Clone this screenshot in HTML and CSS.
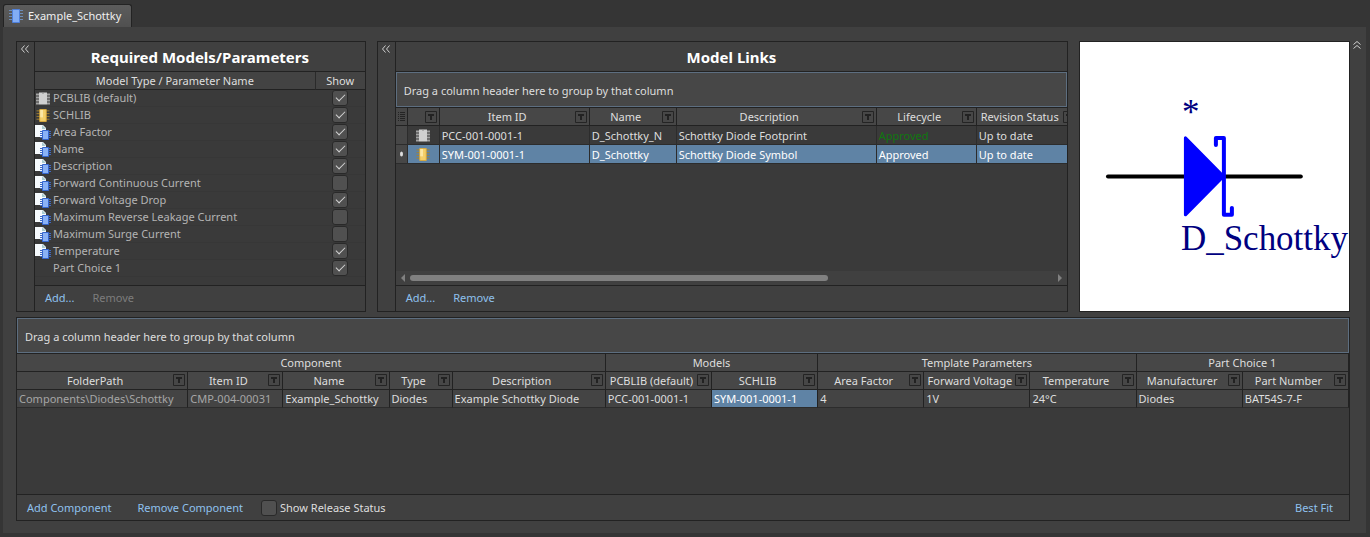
FILE: index.html
```html
<!DOCTYPE html>
<html lang="en">
<head>
    <meta charset="UTF-8">
    <meta name="viewport" content="width=device-width, initial-scale=1.0">
    <title>Example_Schottky</title>
    <link rel="stylesheet" href="styles.css">
</head>
<body>

    <!-- shared icons -->
    <svg class="sprite">
        <symbol id="filter" viewBox="0 0 12 12">
            <path d="M0.500 0.500h11v11h-11z" fill="none" stroke="#242424"/>
            <path d="M3 3h6v2H7v4H5V5H3z" fill="#222"/>
        </symbol>
        <symbol id="chip-gray" viewBox="0 0 14 12">
            <path d="M0 1h3v2H0zM0 4h3v2H0zM0 7h3v2H0zM0 10h3v2H0zM11 1h3v2h-3zM11 4h3v2h-3zM11 7h3v2h-3zM11 10h3v2h-3z" fill="#a2a2a2"/>
            <path d="M3 0h8v12H3z" fill="#d0d0d0"/>
            <path d="M6 0h2v1H6z" fill="#888"/>
        </symbol>
        <symbol id="chip-gold" viewBox="0 0 14 14">
            <path d="M0 2h14M0 5h14M0 8h14M0 11h14" stroke="#a8832f"/>
            <path d="M3.500 0.500h7v13h-7z" fill="#f4cf69" stroke="#d9a93a"/>
            <path d="M4 1h3v8H4z" fill="#fbe7a5"/>
        </symbol>
        <symbol id="chip-blue" viewBox="0 0 14 14">
            <path d="M0 1.500h14M0 4.500h14M0 7.500h14M0 10.500h14" stroke="#6c8db8"/>
            <path d="M3.500 0.500h7v13h-7z" fill="#82adf5" stroke="#4f80db"/>
        </symbol>
        <symbol id="param" viewBox="0 0 16 16">
            <path d="M0 1h8l3 3v9H0z" fill="#f6fafd"/>
            <path d="M7 1l4 4H7z" fill="#a9cbd0"/>
            <path d="M5 7.500h11M5 9.500h11M5 11.500h11M5 13.500h11" stroke="#3f6ac4"/>
            <path d="M7.500 6.500h6v9h-6z" fill="#8ab2f6" stroke="#3566cf"/>
        </symbol>
        <symbol id="collapse" viewBox="0 0 8 8">
            <path d="M3.500 0.500L0.500 4l3 3.500M7.500 0.500L4.500 4l3 3.500" fill="none" stroke="#d0d0d0"/>
        </symbol>
    </svg>

    <div class="tabs">
        <a href="#" class="tab"><svg class="ico-tab"><use href="#chip-blue"/></svg>Example_Schottky</a>
    </div>

    <main class="workspace">
        <div class="top">

            <section class="panel">
                <button class="collapse" aria-label="Collapse required models"><svg><use href="#collapse"/></svg></button>
                <div class="panel-body">
                    <h2>Required Models/Parameters</h2>
                    <div class="list">
                        <table class="params">
                            <thead>
                                <tr><th>Model Type / Parameter Name</th><th class="show">Show</th></tr>
                            </thead>
                            <tbody>
                                <tr><td><label for="p1"><svg><use href="#chip-gray"/></svg>PCBLIB (default)</label></td><td><input type="checkbox" id="p1" checked></td></tr>
                                <tr><td><label for="p2"><svg><use href="#chip-gold"/></svg>SCHLIB</label></td><td><input type="checkbox" id="p2" checked></td></tr>
                                <tr><td><label for="p3"><svg class="doc"><use href="#param"/></svg>Area Factor</label></td><td><input type="checkbox" id="p3" checked></td></tr>
                                <tr><td><label for="p4"><svg class="doc"><use href="#param"/></svg>Name</label></td><td><input type="checkbox" id="p4" checked></td></tr>
                                <tr><td><label for="p5"><svg class="doc"><use href="#param"/></svg>Description</label></td><td><input type="checkbox" id="p5" checked></td></tr>
                                <tr><td><label for="p6"><svg class="doc"><use href="#param"/></svg>Forward Continuous Current</label></td><td><input type="checkbox" id="p6"></td></tr>
                                <tr><td><label for="p7"><svg class="doc"><use href="#param"/></svg>Forward Voltage Drop</label></td><td><input type="checkbox" id="p7" checked></td></tr>
                                <tr><td><label for="p8"><svg class="doc"><use href="#param"/></svg>Maximum Reverse Leakage Current</label></td><td><input type="checkbox" id="p8"></td></tr>
                                <tr><td><label for="p9"><svg class="doc"><use href="#param"/></svg>Maximum Surge Current</label></td><td><input type="checkbox" id="p9"></td></tr>
                                <tr><td><label for="p10"><svg class="doc"><use href="#param"/></svg>Temperature</label></td><td><input type="checkbox" id="p10" checked></td></tr>
                                <tr><td><label for="p11"><svg></svg>Part Choice 1</label></td><td><input type="checkbox" id="p11" checked></td></tr>
                            </tbody>
                        </table>
                    </div>
                    <div class="actions">
                        <button>Add...</button>
                        <button disabled>Remove</button>
                    </div>
                </div>
            </section>

            <section class="panel">
                <button class="collapse" aria-label="Collapse model links"><svg><use href="#collapse"/></svg></button>
                <div class="panel-body">
                    <h2>Model Links</h2>
                    <div class="groupby">Drag a column header here to group by that column</div>
                    <div class="list">
                        <table class="grid links">
                            <colgroup>
                                <col class="w-mark"><col class="w-icon"><col class="w-item"><col class="w-name"><col class="w-desc"><col class="w-life"><col class="w-rev">
                            </colgroup>
                            <thead>
                                <tr>
                                    <th class="mark"><svg class="rows" viewBox="0 0 7 10"><path d="M0 0.500h1M0 2.500h1M0 4.500h1M0 6.500h1M0 8.500h1M2 0.500h5M2 2.500h5M2 4.500h5M2 6.500h5M2 8.500h5" stroke="#242424"/></svg></th>
                                    <th><div><span></span><button aria-label="Filter type"><svg><use href="#filter"/></svg></button></div></th>
                                    <th><div><span>Item ID</span><button aria-label="Filter item"><svg><use href="#filter"/></svg></button></div></th>
                                    <th><div><span>Name</span><button aria-label="Filter name"><svg><use href="#filter"/></svg></button></div></th>
                                    <th><div><span>Description</span><button aria-label="Filter description"><svg><use href="#filter"/></svg></button></div></th>
                                    <th><div><span>Lifecycle</span><button aria-label="Filter lifecycle"><svg><use href="#filter"/></svg></button></div></th>
                                    <th><div><span>Revision Status</span><button aria-label="Filter revision"><svg><use href="#filter"/></svg></button></div></th>
                                </tr>
                            </thead>
                            <tbody>
                                <tr>
                                    <td class="mark"></td>
                                    <td class="type"><svg><use href="#chip-gray"/></svg></td>
                                    <td>PCC-001-0001-1</td>
                                    <td>D_Schottky_N</td>
                                    <td>Schottky Diode Footprint</td>
                                    <td class="approved">Approved</td>
                                    <td>Up to date</td>
                                </tr>
                                <tr class="selected">
                                    <td class="mark"><svg class="dot" viewBox="0 0 3 6"><ellipse cx="1.500" cy="3" rx="1.500" ry="2.500" fill="#ddd"/></svg></td>
                                    <td class="type"><svg><use href="#chip-gold"/></svg></td>
                                    <td>SYM-001-0001-1</td>
                                    <td>D_Schottky</td>
                                    <td>Schottky Diode Symbol</td>
                                    <td>Approved</td>
                                    <td>Up to date</td>
                                </tr>
                            </tbody>
                        </table>
                    </div>
                    <div class="scroll">
                        <svg viewBox="0 0 4 8"><path d="M4 0v8L0 4z" fill="#808080"/></svg>
                        <div class="track"><div class="thumb"></div></div>
                        <svg viewBox="0 0 4 8"><path d="M0 0v8l4-4z" fill="#808080"/></svg>
                    </div>
                    <div class="actions">
                        <button>Add...</button>
                        <button>Remove</button>
                    </div>
                </div>
            </section>

            <div class="preview">
                <svg viewBox="0 0 269 269">
                    <path d="M28 134.500h193" stroke="#000" stroke-width="4" stroke-linecap="round"/>
                    <path d="M105.500 96v77l38-38.500z" fill="#00f" stroke="#00f" stroke-width="3" stroke-linejoin="round"/>
                    <path d="M136 103v-7h8v77h8v-7" fill="none" stroke="#00f" stroke-width="4" stroke-linecap="round" stroke-linejoin="round"/>
                    <text x="102" y="82">*</text>
                    <text x="101" y="208">D_Schottky</text>
                </svg>
            </div>

            <button class="collapse-up" aria-label="Collapse top"><svg viewBox="0 0 8 8"><path d="M0.500 3.500L4 0.500l3.500 3M0.500 7.500L4 4.500l3.500 3" fill="none" stroke="#d0d0d0"/></svg></button>
        </div>

        <section class="panel components">
            <div class="panel-body">
                <div class="groupby">Drag a column header here to group by that column</div>
                <div class="list">
                    <table class="grid parts">
                        <colgroup>
                            <col class="c-folder"><col class="c-id"><col class="c-name"><col class="c-type"><col class="c-desc">
                            <col class="c-std"><col class="c-std"><col class="c-std"><col class="c-std"><col class="c-std"><col class="c-std"><col class="c-std">
                        </colgroup>
                        <thead>
                            <tr>
                                <th colspan="5">Component</th>
                                <th colspan="2">Models</th>
                                <th colspan="3">Template Parameters</th>
                                <th colspan="2">Part Choice 1</th>
                            </tr>
                            <tr>
                                <th><div><span>FolderPath</span><button aria-label="Filter folder"><svg><use href="#filter"/></svg></button></div></th>
                                <th><div><span>Item ID</span><button aria-label="Filter item"><svg><use href="#filter"/></svg></button></div></th>
                                <th><div><span>Name</span><button aria-label="Filter name"><svg><use href="#filter"/></svg></button></div></th>
                                <th><div><span>Type</span><button aria-label="Filter type"><svg><use href="#filter"/></svg></button></div></th>
                                <th><div><span>Description</span><button aria-label="Filter description"><svg><use href="#filter"/></svg></button></div></th>
                                <th><div><span>PCBLIB (default)</span><button aria-label="Filter PCBLIB"><svg><use href="#filter"/></svg></button></div></th>
                                <th><div><span>SCHLIB</span><button aria-label="Filter SCHLIB"><svg><use href="#filter"/></svg></button></div></th>
                                <th><div><span>Area Factor</span><button aria-label="Filter area"><svg><use href="#filter"/></svg></button></div></th>
                                <th><div><span>Forward Voltage</span><button aria-label="Filter voltage"><svg><use href="#filter"/></svg></button></div></th>
                                <th><div><span>Temperature</span><button aria-label="Filter temperature"><svg><use href="#filter"/></svg></button></div></th>
                                <th><div><span>Manufacturer</span><button aria-label="Filter manufacturer"><svg><use href="#filter"/></svg></button></div></th>
                                <th><div><span>Part Number</span><button aria-label="Filter part number"><svg><use href="#filter"/></svg></button></div></th>
                            </tr>
                        </thead>
                        <tbody>
                            <tr>
                                <td class="dim">Components\Diodes\Schottky</td>
                                <td class="dim">CMP-004-00031</td>
                                <td>Example_Schottky</td>
                                <td>Diodes</td>
                                <td>Example Schottky Diode</td>
                                <td>PCC-001-0001-1</td>
                                <td class="active">SYM-001-0001-1</td>
                                <td>4</td>
                                <td>1V</td>
                                <td>24°C</td>
                                <td>Diodes</td>
                                <td>BAT54S-7-F</td>
                            </tr>
                        </tbody>
                    </table>
                </div>
                <div class="actions wide">
                    <button class="add">Add Component</button>
                    <button>Remove Component</button>
                    <label><input type="checkbox">Show Release Status</label>
                    <button class="fit">Best Fit</button>
                </div>
            </div>
        </section>
    </main>

</body>
</html>
```
FILE: styles.css
```css
* {
    box-sizing: border-box;
}

body {
    margin: 0;
    min-height: 100vh;
    display: flex;
    flex-direction: column;
    padding: 4px 4px 4px 3px;
    background: #353535;
    color: #dedede;
    font: 11px/16px "Noto Sans", "Open Sans", sans-serif;
}

svg {
    display: block;
    flex: none;
}

button {
    padding: 0;
    border: 0;
    background: none;
    color: inherit;
    font: inherit;
}

.sprite {
    position: absolute;
    width: 0;
    height: 0;
}

/* tabs */
.tabs {
    display: flex;
}

.tab {
    display: flex;
    align-items: center;
    gap: 5px;
    height: 23px;
    padding: 0 10px 0 5px;
    border: 1px solid #232323;
    border-bottom: 0;
    border-radius: 3px 3px 0 0;
    background: linear-gradient(#5c5c5c, #505050);
    color: #f0f0f0;
    text-decoration: none;
}

.ico-tab {
    width: 14px;
    height: 14px;
}

.workspace {
    flex: 1;
    display: flex;
    flex-direction: column;
    gap: 5px;
    padding: 14px 16px 12px 13px;
    background: #404040;
}

/* the last column is the chevron in the right margin */
.top {
    display: grid;
    grid-template-columns: 350fr 692fr 271fr 8px;
    column-gap: 11px;
    margin-right: -19px;
}

/* panels */
.panel {
    display: flex;
    min-width: 0;
    border: 1px solid #222;
}

.collapse {
    display: flex;
    width: 18px;
    padding: 3px 0 0 4px;
    border-right: 1px solid #222;
}

.collapse svg,
.collapse-up svg {
    width: 8px;
    height: 8px;
}

.collapse-up {
    align-self: start;
    margin-left: -8px;
}

.panel-body {
    flex: 1;
    min-width: 0;
    display: flex;
    flex-direction: column;
}

h2 {
    margin: 0;
    height: 30px;
    border-bottom: 1px solid #222;
    color: #fff;
    font-size: 15px;
    line-height: 31px;
    text-align: center;
}

.list {
    flex: 1;
    overflow: hidden;
    background: #3a3a3a;
}

.groupby {
    height: 35px;
    margin-bottom: 1px;
    padding: 0 7px;
    border: 1px solid #5d6e80;
    box-shadow: 0 1px #222;
    background: #474747;
    line-height: 35px;
}

.actions {
    display: flex;
    gap: 18px;
    height: 26px;
    padding: 0 10px;
    border-top: 1px solid #222;
    color: #8fc1ee;
}

.actions button:disabled {
    color: #7d7d7d;
}

.actions .add {
    margin-right: 8px;
}

.actions label {
    display: flex;
    align-items: center;
    gap: 3px;
    color: #dedede;
}

.actions .fit {
    margin-left: auto;
    margin-right: 6px;
}

/* tables */
table {
    width: 100%;
    border-spacing: 0;
    table-layout: fixed;
}

th {
    height: 18px;
    padding: 0;
    border-bottom: 1px solid #222;
    background: #474747;
    font-weight: normal;
    line-height: 17px;
}

td {
    padding: 0;
    white-space: nowrap;
}

.params th {
    background: #434343;
}

.params .show {
    width: 50px;
    border-left: 1px solid #2a2a2a;
}

.params td {
    height: 17px;
    border-bottom: 1px solid #373737;
    color: #b4b4b4;
    text-align: center;
}

.params label {
    display: flex;
    align-items: center;
    gap: 3px;
    height: 16px;
    padding-left: 1px;
}

.params svg {
    width: 14px;
    height: 13px;
}

.params .doc {
    width: 16px;
    height: 16px;
    margin: 0 -1px;
}

input[type="checkbox"] {
    appearance: none;
    display: block;
    width: 16px;
    height: 16px;
    margin: 0 auto;
    border: 1px solid #292929;
    border-radius: 3px;
    background: #505050;
}

/* tick drawn from two borders */
input[type="checkbox"]:checked::before {
    content: "";
    display: block;
    width: 4px;
    height: 8px;
    margin: 1px 5px;
    border: solid #d4d4d4;
    border-width: 0 1px 1px 0;
    transform: rotate(45deg);
}

.grid th,
.grid td {
    border-right: 1px solid #222;
}

.grid th div {
    display: flex;
    align-items: center;
    padding-right: 2px;
}

.grid th span {
    flex: 1;
    min-width: 0;
    white-space: nowrap;
}

.grid th button svg {
    width: 12px;
    height: 12px;
}

.grid td {
    height: 18px;
    padding-left: 2px;
    border-bottom: 1px solid #2c2c2c;
    line-height: 17px;
}

.links {
    width: calc(100% + 9px);
}

.links td {
    height: 19px;
    border-right-color: #2c2c2c;
}

.grid .mark {
    padding: 0;
    background: #474747;
}

.rows {
    width: 7px;
    height: 10px;
    margin: 0 auto;
}

.dot {
    width: 3px;
    height: 6px;
    margin: 0 auto;
}

.type svg {
    width: 14px;
    height: 13px;
    margin-left: 6px;
}

.approved {
    color: #107810;
}

.selected td,
.grid .active {
    background: #5f83a5;
    color: #fff;
}

.w-mark { width: 12px; }
.w-icon { width: 32px; }
.w-item { width: 150px; }
.w-name { width: 87px; }
.w-desc { width: 200px; }
.w-life { width: 100px; }
.w-rev { width: 101px; }

.parts td {
    background: #444;
}

.parts .dim {
    color: #a6a6a6;
}

.c-folder { width: 171px; }
.c-id { width: 95px; }
.c-name { width: 106px; }
.c-type { width: 63px; }
.c-desc { width: 153px; }
.c-std { width: 106px; }

/* scrollbar under the links table */
.scroll {
    display: flex;
    align-items: center;
    gap: 5px;
    height: 14px;
    padding: 0 5px;
    background: #404040;
}

.scroll svg {
    width: 4px;
    height: 8px;
}

.track {
    flex: 1;
}

.thumb {
    width: 65%;
    height: 6px;
    border-radius: 3px;
    background: #808080;
}

.preview {
    border: 1px solid #222;
    background: #fff;
}

.preview svg {
    width: 100%;
    height: auto;
}

.preview text {
    fill: #000080;
    font: 35px "Liberation Serif", serif;
}

.components {
    flex: 1;
}
```
